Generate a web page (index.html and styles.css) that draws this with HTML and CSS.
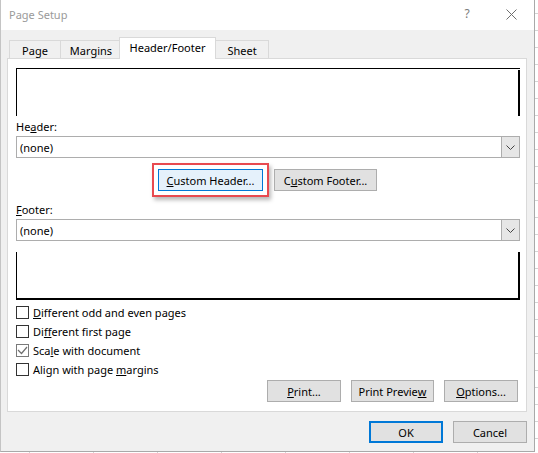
FILE: index.html
```html
<!DOCTYPE html>
<html lang="en">
<head>
<meta charset="utf-8">
<title>Page Setup</title>
<link rel="stylesheet" href="styles.css">
</head>
<body>
<div class="dialog">
  <div class="titlebar">
    <span class="title">Page Setup</span>
    <span class="help">?</span>
    <span class="close"><svg width="11" height="11" viewBox="0 0 11 11"><path d="M0.5 0.5 L10.5 10.5 M10.5 0.5 L0.5 10.5" stroke="#6e6e6e" stroke-width="1" fill="none"/></svg></span>
  </div>
  <div class="main">
    <div class="tabs">
      <div class="tab tab-page">Page</div>
      <div class="tab tab-margins">Margins</div>
      <div class="tab tab-active">Header/Footer</div>
      <div class="tab tab-sheet">Sheet</div>
    </div>
    <div class="panel">
      <div class="preview preview-header"></div>
      <div class="field-label">He<u>a</u>der:</div>
      <div class="select">
        <span class="select-value">(none)</span>
        <span class="select-btn"><svg width="9" height="5" viewBox="0 0 9 5"><polyline points="0.5,0.5 4.5,4.5 8.5,0.5" stroke="#444" stroke-width="1" fill="none"/></svg></span>
      </div>
      <div class="custom-row">
        <span class="highlight"><span class="btn btn-focus btn-custom"><u>C</u>ustom Header...</span></span>
        <span class="btn btn-custom btn-footer">C<u>u</u>stom Footer...</span>
      </div>
      <div class="field-label field-footer"><u>F</u>ooter:</div>
      <div class="select">
        <span class="select-value">(none)</span>
        <span class="select-btn"><svg width="9" height="5" viewBox="0 0 9 5"><polyline points="0.5,0.5 4.5,4.5 8.5,0.5" stroke="#444" stroke-width="1" fill="none"/></svg></span>
      </div>
      <div class="preview preview-footer"></div>
      <div class="checks">
        <div class="check-row"><span class="box"></span><span><u>D</u>ifferent odd and even pages</span></div>
        <div class="check-row"><span class="box"></span><span>Di<u>f</u>ferent first page</span></div>
        <div class="check-row"><span class="box box-checked"><svg width="11" height="11" viewBox="0 0 11 11"><polyline points="1,5 4.5,8.5 10,2" stroke="#6f6f6f" stroke-width="1.2" fill="none"/></svg></span><span>Sca<u>l</u>e with document</span></div>
        <div class="check-row"><span class="box"></span><span>Align with page <u>m</u>argins</span></div>
      </div>
      <div class="panel-buttons">
        <span class="btn btn-print"><u>P</u>rint...</span>
        <span class="btn btn-preview">Print Previe<u>w</u></span>
        <span class="btn btn-options"><u>O</u>ptions...</span>
      </div>
    </div>
    <div class="dialog-buttons">
      <span class="btn btn-ok">OK</span>
      <span class="btn btn-cancel">Cancel</span>
    </div>
  </div>
</div>
</body>
</html>
```

FILE: styles.css
```css
html, body {
  margin: 0;
  padding: 0;
}
body {
  width: 538px;
  height: 453px;
  overflow: hidden;
  background-color: #ffffff;
  background-image:
    linear-gradient(to right, #d4d4d4 1px, transparent 1px),
    linear-gradient(#d4d4d4 1px, transparent 1px);
  background-size: 64px 17px;
  background-position: 29px 13px;
  font-family: "Noto Sans", "Open Sans", sans-serif;
  font-size: 11px;
  color: #000;
}
u {
  text-decoration: underline;
  text-underline-offset: 1px;
}
.dialog {
  box-sizing: border-box;
  width: 535px;
  height: 452px;
  background: #f0f0f0;
  border-left: 1px solid #c4c4c4;
  border-right: 1px solid #a9a9a9;
  border-bottom: 1px solid #a9a9a9;
}
.titlebar {
  height: 30px;
  background: #ffffff;
  display: flex;
  align-items: center;
}
.title {
  flex: 1;
  padding-left: 8px;
  color: #9a9a9a;
  line-height: 16px;
}
.help {
  width: 46px;
  padding-left: 4px;
  box-sizing: border-box;
  text-align: center;
  color: #7a7a7a;
  font-size: 12px;
  line-height: 16px;
  margin-top: -2px;
}
.close {
  width: 46px;
  height: 30px;
  display: flex;
  align-items: center;
  justify-content: center;
  margin-top: -2px;
}
.close svg {
  display: block;
}
.main {
  padding: 7px 6px 0 6px;
}
.tabs {
  position: relative;
  z-index: 1;
  display: flex;
  align-items: flex-end;
  height: 22px;
  padding-left: 2px;
  margin-bottom: -1px;
}
.tab {
  box-sizing: border-box;
  height: 18px;
  margin-bottom: 1px;
  border: 1px solid #d9d9d9;
  border-bottom: none;
  background: #f0f0f0;
  display: flex;
  align-items: center;
  justify-content: center;
  line-height: 15px;
  padding-top: 1px;
}
.tab + .tab {
  margin-left: -1px;
}
.tab-page { width: 52px; }
.tab-margins { width: 60px; padding-left: 2px; }
.tab-active {
  width: 97px;
  height: 22px;
  margin-bottom: 0;
  background: #ffffff;
  padding-top: 0;
  padding-bottom: 2px;
}
.tab-sheet { width: 54px; }
.panel {
  box-sizing: border-box;
  width: 520px;
  height: 354px;
  background: #ffffff;
  border: 1px solid #d9d9d9;
  padding: 9px 6px 0 8px;
  display: flex;
  flex-direction: column;
}
.preview {
  box-sizing: border-box;
  width: 504px;
  height: 48px;
  flex: none;
}
.preview-header {
  border-top: 1px solid #000;
  border-left: 1px solid #000;
  background: linear-gradient(#000, #000) right 0 top 1px / 2px 100% no-repeat;
}
.preview-footer {
  margin-top: 11px;
  border-left: 1px solid #000;
  border-bottom: 2px solid #000;
  background: linear-gradient(#000, #000) right 0 top 0 / 2px 100% no-repeat;
}
.field-label {
  margin-top: 3px;
  line-height: 16px;
  height: 16px;
  margin-bottom: 1px;
}
.field-footer {
  margin-top: 11px;
}
.select {
  box-sizing: border-box;
  width: 504px;
  height: 22px;
  border: 1px solid #adadad;
  background: #fff;
  display: flex;
  align-items: stretch;
  flex: none;
}
.select-value {
  flex: 1;
  padding-left: 3px;
  display: flex;
  align-items: center;
  line-height: 15px;
}
.select-btn {
  width: 17px;
  border-left: 1px solid #adadad;
  background: #e6e6e6;
  display: flex;
  align-items: center;
  justify-content: center;
}
.select-btn svg {
  display: block;
}
.custom-row {
  margin-top: 11px;
  display: flex;
  justify-content: center;
  gap: 11px;
  padding-right: 1px;
}
.btn {
  box-sizing: border-box;
  height: 22px;
  border: 1px solid #adadad;
  background: #e1e1e1;
  display: flex;
  align-items: center;
  justify-content: center;
  line-height: 15px;
  white-space: nowrap;
  flex: none;
}
.highlight {
  display: flex;
  margin: -6px;
  padding: 4px;
  border: 2px solid #e84a50;
  box-shadow: 2px 3px 4px rgba(0, 0, 0, 0.28);
}
.btn-custom {
  width: 105px;
}
.btn-footer {
  width: 103px;
}
.btn-focus {
  background: #e5f1fb;
  border-color: #0078d7;
}
.checks {
  margin-top: 3px;
  display: flex;
  flex-direction: column;
}
.check-row {
  height: 19px;
  display: flex;
  align-items: center;
  gap: 4px;
  line-height: 15px;
}
.box {
  box-sizing: border-box;
  width: 13px;
  height: 13px;
  border: 1px solid #333;
  background: #fff;
  display: flex;
  align-items: center;
  justify-content: center;
  flex: none;
}
.box-checked {
  border-color: #7a7a7a;
}
.box svg {
  display: block;
}
.panel-buttons {
  margin-top: 1px;
  display: flex;
  justify-content: flex-end;
  gap: 10px;
  padding-right: 2px;
}
.btn-print { width: 74px; }
.btn-preview { width: 83px; }
.btn-options { width: 74px; }
.dialog-buttons {
  width: 520px;
  margin-top: 9px;
  display: flex;
  justify-content: flex-end;
  gap: 10px;
}
.btn-ok {
  width: 74px;
  border: 2px solid #0078d7;
}
.btn-cancel {
  width: 74px;
}
```
